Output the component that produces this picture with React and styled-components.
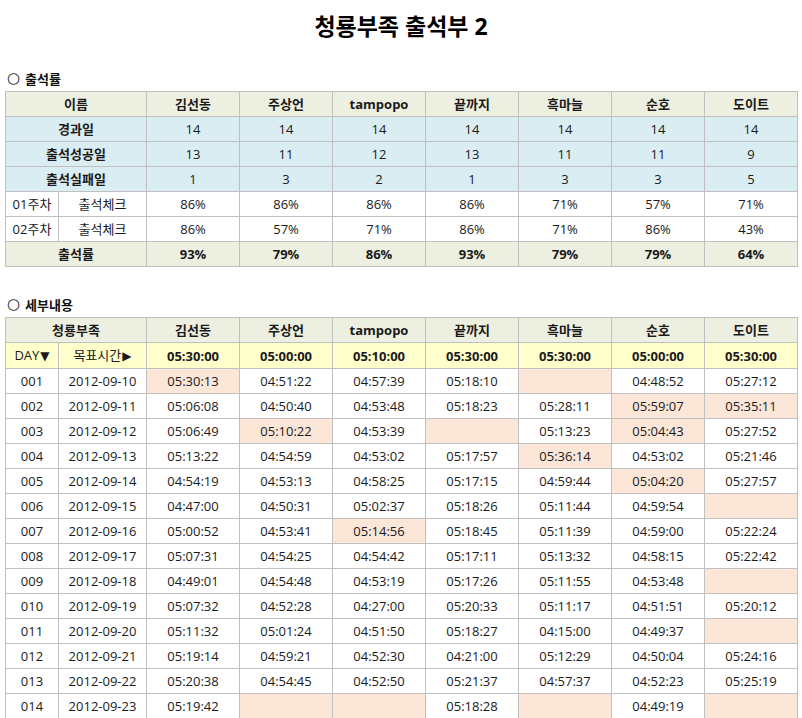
import React from "react";
import styled, { createGlobalStyle } from "styled-components";

const GlobalStyle = createGlobalStyle`
  body {
    margin: 0;
    background: #FFFFFF;
    color: #111111;
    font-family: "Open Sans", "Noto Sans CJK KR", sans-serif;
  }
`;

const NAMES = ["김선동", "주상언", "tampopo", "끝까지", "흑마늘", "순호", "도이트"];

const SUMMARY = [
  { label: "경과일", values: [14, 14, 14, 14, 14, 14, 14] },
  { label: "출석성공일", values: [13, 11, 12, 13, 11, 11, 9] },
  { label: "출석실패일", values: [1, 3, 2, 1, 3, 3, 5] },
];

const WEEKS = [
  { week: "01주차", values: ["86%", "86%", "86%", "86%", "71%", "57%", "71%"] },
  { week: "02주차", values: ["86%", "57%", "71%", "86%", "71%", "86%", "43%"] },
];

const RATES = ["93%", "79%", "86%", "93%", "79%", "79%", "64%"];
const TARGETS = ["05:30:00", "05:00:00", "05:10:00", "05:30:00", "05:30:00", "05:00:00", "05:30:00"];

// "!" 접두사 = 목표시간 초과(주황 배경), "!" 만 있으면 결석
const DAYS = [
  ["001", "2012-09-10", ["!05:30:13", "04:51:22", "04:57:39", "05:18:10", "!", "04:48:52", "05:27:12"]],
  ["002", "2012-09-11", ["05:06:08", "04:50:40", "04:53:48", "05:18:23", "05:28:11", "!05:59:07", "!05:35:11"]],
  ["003", "2012-09-12", ["05:06:49", "!05:10:22", "04:53:39", "!", "05:13:23", "!05:04:43", "05:27:52"]],
  ["004", "2012-09-13", ["05:13:22", "04:54:59", "04:53:02", "05:17:57", "!05:36:14", "04:53:02", "05:21:46"]],
  ["005", "2012-09-14", ["04:54:19", "04:53:13", "04:58:25", "05:17:15", "04:59:44", "!05:04:20", "05:27:57"]],
  ["006", "2012-09-15", ["04:47:00", "04:50:31", "05:02:37", "05:18:26", "05:11:44", "04:59:54", "!"]],
  ["007", "2012-09-16", ["05:00:52", "04:53:41", "!05:14:56", "05:18:45", "05:11:39", "04:59:00", "05:22:24"]],
  ["008", "2012-09-17", ["05:07:31", "04:54:25", "04:54:42", "05:17:11", "05:13:32", "04:58:15", "05:22:42"]],
  ["009", "2012-09-18", ["04:49:01", "04:54:48", "04:53:19", "05:17:26", "05:11:55", "04:53:48", "!"]],
  ["010", "2012-09-19", ["05:07:32", "04:52:28", "04:27:00", "05:20:33", "05:11:17", "04:51:51", "05:20:12"]],
  ["011", "2012-09-20", ["05:11:32", "05:01:24", "04:51:50", "05:18:27", "04:15:00", "04:49:37", "!"]],
  ["012", "2012-09-21", ["05:19:14", "04:59:21", "04:52:30", "04:21:00", "05:12:29", "04:50:04", "05:24:16"]],
  ["013", "2012-09-22", ["05:20:38", "04:54:45", "04:52:50", "05:21:37", "04:57:37", "04:52:23", "05:25:19"]],
  ["014", "2012-09-23", ["05:19:42", "!", "!", "05:18:28", "!", "04:49:19", "!"]],
];

const BG = {
  head: "#EDEFE0",
  blue: "#DAEDF3",
  yellow: "#FFFFCC",
  late: "#FCE6D8",
  plain: "#FFFFFF",
};

function Cols() {
  return (
    <colgroup>
      <col style={{ width: 53 }} />
      <col style={{ width: 88 }} />
      {NAMES.map((n) => (
        <col key={n} style={{ width: 93 }} />
      ))}
    </colgroup>
  );
}

function App() {
  return (
    <Page>
      <GlobalStyle />
      <Title>청룡부족 출석부 2</Title>

      <SectionLabel>
        <Circle>○</Circle>출석률
      </SectionLabel>
      <Sheet>
        <Cols />
        <tbody>
          <Row>
            <Cell colSpan={2} $bg="head" $bold>이름</Cell>
            {NAMES.map((n) => (
              <Cell key={n} $bg="head" $bold>{n}</Cell>
            ))}
          </Row>
          {SUMMARY.map((r) => (
            <Row key={r.label}>
              <Cell colSpan={2} $bg="blue" $bold>{r.label}</Cell>
              {r.values.map((v, i) => (
                <Cell key={i} $bg="blue">{v}</Cell>
              ))}
            </Row>
          ))}
          {WEEKS.map((r) => (
            <Row key={r.week}>
              <Cell>{r.week}</Cell>
              <Cell>출석체크</Cell>
              {r.values.map((v, i) => (
                <Cell key={i}>{v}</Cell>
              ))}
            </Row>
          ))}
          <Row>
            <Cell colSpan={2} $bg="head" $bold>출석률</Cell>
            {RATES.map((v, i) => (
              <Cell key={i} $bg="head" $bold>{v}</Cell>
            ))}
          </Row>
        </tbody>
      </Sheet>

      <SectionLabel $gap>
        <Circle>○</Circle>세부내용
      </SectionLabel>
      <Sheet>
        <Cols />
        <tbody>
          <Row>
            <Cell colSpan={2} $bg="head" $bold>청룡부족</Cell>
            {NAMES.map((n) => (
              <Cell key={n} $bg="head" $bold>{n}</Cell>
            ))}
          </Row>
          <Row>
            <Cell $bg="yellow">DAY<Arrow>▼</Arrow></Cell>
            <Cell $bg="yellow">목표시간<Arrow>▶</Arrow></Cell>
            {TARGETS.map((t, i) => (
              <Cell key={i} $bg="yellow" $bold>{t}</Cell>
            ))}
          </Row>
          {DAYS.map(([day, date, times]) => (
            <Row key={day}>
              <Cell>{day}</Cell>
              <Cell>{date}</Cell>
              {times.map((t, i) => {
                const late = t.startsWith("!");
                return (
                  <Cell key={i} $bg={late ? "late" : "plain"}>
                    {late ? t.slice(1) : t}
                  </Cell>
                );
              })}
            </Row>
          ))}
        </tbody>
      </Sheet>
    </Page>
  );
}

const Page = styled.div`
  width: 792px;
  padding: 0 5px;
  display: flex;
  flex-direction: column;
`;

const Title = styled.h1`
  margin: 0 0 14px;
  height: 52px;
  line-height: 52px;
  text-align: center;
  font-size: 23px;
  font-weight: 700;
  color: #000000;
`;

const SectionLabel = styled.div`
  height: 25px;
  margin-top: ${(p) => (p.$gap ? "25px" : "0")};
  display: flex;
  align-items: center;
  padding-left: 2px;
  font-size: 13px;
  font-weight: 700;
  color: #111111;
`;

const Circle = styled.span`
  font-family: "DejaVu Sans", sans-serif;
  font-weight: 400;
  font-size: 15px;
  line-height: 1;
  margin-right: 5px;
`;

const Arrow = styled.span`
  font-family: "DejaVu Sans", sans-serif;
  font-size: 12px;
  margin-left: 1px;
`;

const Sheet = styled.table`
  width: 792px;
  table-layout: fixed;
  border-collapse: collapse;
  font-size: 13px;
`;

const Row = styled.tr`
  height: 25px;
`;

const Cell = styled.td`
  border: 1px solid #C0C0C0;
  padding: 0;
  height: 24px;
  line-height: 24px;
  text-align: center;
  white-space: nowrap;
  overflow: hidden;
  background: ${(p) => BG[p.$bg || "plain"]};
  font-weight: ${(p) => (p.$bold ? 700 : 400)};
  color: #1A1A1A;
`;

export default App;
